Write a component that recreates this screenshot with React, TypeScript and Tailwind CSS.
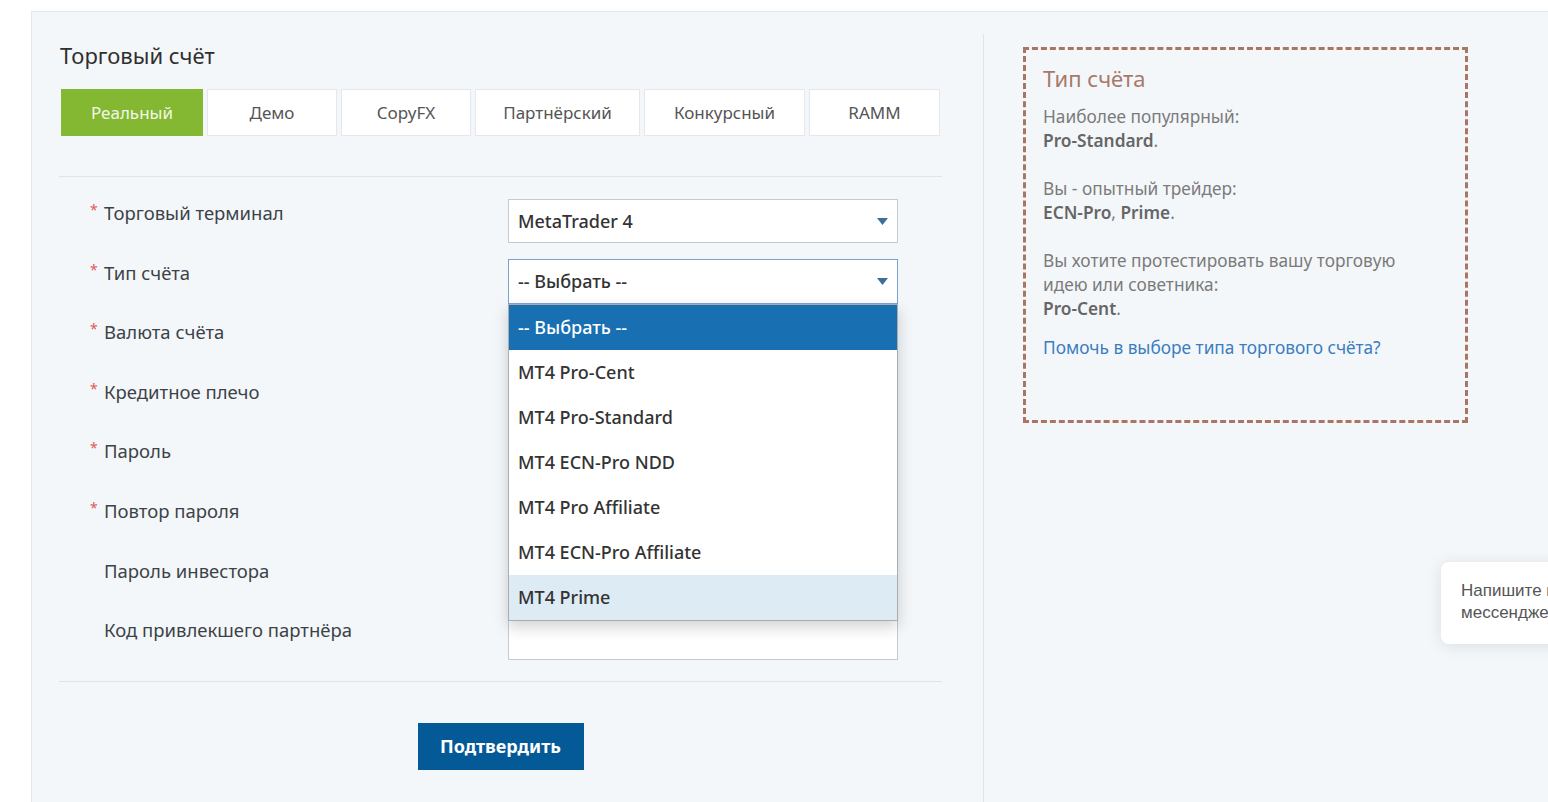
import React from "react";

const font = { fontFamily: '"Noto Sans", "Open Sans", sans-serif' };

function Arrow() {
  return (
    <svg width="11" height="7" viewBox="0 0 11 7" className="shrink-0">
      <path d="M0 0 L11 0 L5.5 7 Z" fill="#3f6f96" />
    </svg>
  );
}

const tabs = [
  { t: "Реальный", w: "w-[142px]", active: true },
  { t: "Демо", w: "w-[130px]" },
  { t: "CopyFX", w: "w-[130px]" },
  { t: "Партнёрский", w: "w-[165px]" },
  { t: "Конкурсный", w: "w-[161px]" },
  { t: "RAMM", w: "w-[131px]" },
];

const rows = [
  { label: "Торговый терминал", req: true },
  { label: "Тип счёта", req: true },
  { label: "Валюта счёта", req: true },
  { label: "Кредитное плечо", req: true },
  { label: "Пароль", req: true },
  { label: "Повтор пароля", req: true },
  { label: "Пароль инвестора", req: false },
  { label: "Код привлекшего партнёра", req: false },
];

const options = [
  "-- Выбрать --",
  "MT4 Pro-Cent",
  "MT4 Pro-Standard",
  "MT4 ECN-Pro NDD",
  "MT4 Pro Affiliate",
  "MT4 ECN-Pro Affiliate",
  "MT4 Prime",
];

export default function App() {
  return (
    <div className="w-[1548px] h-[802px] bg-white overflow-hidden relative" style={font}>
      <div className="ml-[31px] mt-[11px] h-[791px] border-l border-t border-[#e2e7ec] bg-[#f4f7fa] flex">
        {/* Left column */}
        <div className="w-[951px] shrink-0 pl-[27px] pr-[41px] pt-[28px]">
          <h1 className="text-[22px] leading-[30px] text-[#2f2f2f] pl-[1px]">Торговый счёт</h1>
          <div className="flex gap-[4px] mt-[19px] pl-[2px]">
            {tabs.map((tb) => (
              <div
                key={tb.t}
                className={`${tb.w} h-[47px] flex items-center justify-center text-[17px] ${
                  tb.active
                    ? "bg-[#84b732] text-[#f1f7e6]"
                    : "bg-white border border-[#e4e7eb] text-[#555]"
                }`}
              >
                {tb.t}
              </div>
            ))}
          </div>
          <div className="mt-[40px] border-t border-[#dfe4e9]" />
          <div className="relative pt-[22px] flex flex-col gap-[15.6px]">
            {rows.map((r, i) => (
              <div key={r.label} className="flex h-[44px]">
                <div className="w-[449px] pl-[31px] flex items-start">
                  <span className="w-[14px] text-[#e05a5a] text-[14px] leading-[22px]">{r.req ? "*" : ""}</span>
                  <span className="text-[18.5px] leading-[28px] text-[#3c4348]">{r.label}</span>
                </div>
                {i === 0 ? (
                  <div className="w-[390px] h-[44px] bg-white border border-[#c7cbcf] flex items-center justify-between pl-[9px] pr-[9px]">
                    <span className="text-[18px] text-[#333] font-medium">MetaTrader 4</span>
                    <Arrow />
                  </div>
                ) : i === 1 ? (
                  <div className="relative w-[390px] h-[45px]">
                    <div className="w-[390px] h-[45px] bg-white border border-[#7aa3d4] flex items-center justify-between pl-[9px] pr-[9px]">
                      <span className="text-[18px] text-[#333] font-medium">-- Выбрать --</span>
                      <Arrow />
                    </div>
                    <div className="absolute left-0 top-[45px] w-[390px] bg-white border border-[#a9adb1] z-10 shadow-[0_6px_14px_rgba(0,0,0,0.18)]">
                      {options.map((o, k) => (
                        <div
                          key={o}
                          className={`h-[45px] flex items-center pl-[9px] text-[18px] font-medium ${
                            k === 0
                              ? "bg-[#1870b2] text-white"
                              : k === options.length - 1
                              ? "bg-[#ddebf4] text-[#333]"
                              : "text-[#333]"
                          }`}
                        >
                          {o}
                        </div>
                      ))}
                    </div>
                  </div>
                ) : (
                  <div className="w-[390px] h-[44px] bg-white border border-[#c7cbcf]" />
                )}
              </div>
            ))}
          </div>
          <div className="mt-[21px] border-t border-[#dfe4e9]" />
          <div className="flex justify-center mt-[41px]">
            <button className="w-[166px] h-[47px] bg-[#045997] text-white text-[18px] font-bold">
              Подтвердить
            </button>
          </div>
        </div>
        {/* Right column */}
        <div className="mt-[22px] border-l border-[#dfe4e9] flex-1 pl-[39px] pt-[13px]">
          <div className="w-[445px] h-[376px] border-[3px] border-dashed border-[#aa7563] pl-[17px] pt-[13px]">
            <div className="text-[22px] leading-[30px] text-[#a8796b]">Тип счёта</div>
            <div className="mt-[12px] text-[17.3px] leading-[24px] text-[#7b7b7b]">
              Наиболее популярный:
              <br />
              <b className="font-semibold text-[#666]">Pro-Standard</b>.
              <br />
              <br />
              Вы - опытный трейдер:
              <br />
              <b className="font-semibold text-[#666]">ECN-Pro</b>, <b className="font-semibold text-[#666]">Prime</b>.
              <br />
              <br />
              Вы хотите протестировать вашу торговую
              <br />
              идею или советника:
              <br />
              <b className="font-semibold text-[#666]">Pro-Cent</b>.
            </div>
            <div className="mt-[15px] text-[17.3px] leading-[24px] text-[#3b7dc1]">
              Помочь в выборе типа торгового счёта?
            </div>
          </div>
        </div>
      </div>
      {/* Chat widget */}
      <div
        className="absolute left-[1441px] top-[562px] w-[140px] h-[82px] bg-white rounded-[8px] shadow-[0_2px_16px_rgba(0,0,0,0.10)] pl-[20px] pt-[18px] text-[17px] leading-[22px] text-[#555] whitespace-nowrap"
        style={{ fontFamily: '"Liberation Sans", Arial, sans-serif' }}
      >
        Напишите нам в
        <br />
        мессенджер
      </div>
    </div>
  );
}
